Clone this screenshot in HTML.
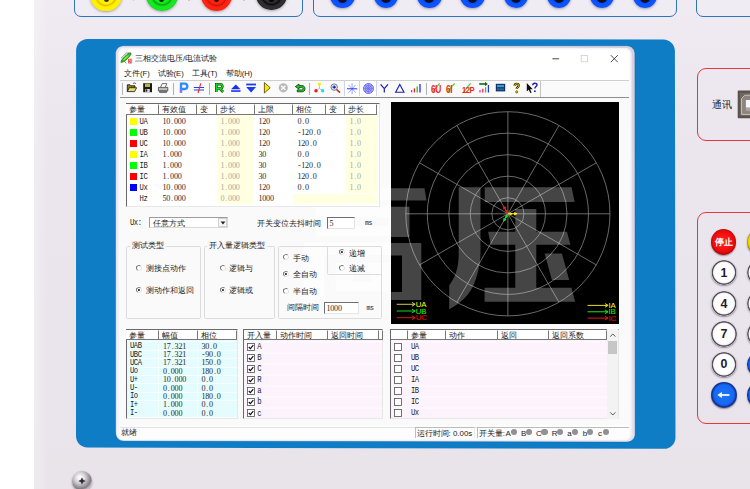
<!DOCTYPE html><html><head><meta charset="utf-8"><title>三相交流电压/电流试验</title><style>
*{box-sizing:border-box;margin:0;padding:0}
html,body{width:750px;height:489px;overflow:hidden;background:#fff}
body{position:relative;font-family:"Liberation Sans",sans-serif;color:#111}
.a{position:absolute}
.t{position:absolute;white-space:nowrap;font-size:7.7px;line-height:10px;height:10px;color:#1a1a1a}
.m{position:absolute;white-space:nowrap;font-family:"Liberation Mono",monospace;font-size:7.2px;letter-spacing:-0.46px;line-height:10px;height:10px;color:#222;transform:scaleY(1.16);transform-origin:0 50%}
.n{position:absolute;white-space:nowrap;font-family:"Liberation Serif",serif;font-size:8.1px;letter-spacing:-0.2px;line-height:10px;height:10px;color:#2a2a2a}
.n i{display:inline-block;width:3.85px;text-align:center;font-style:normal}
.g{color:#a9a9a0}
.hd{position:absolute;background:#fff;border-right:1px solid #777;border-bottom:1px solid #777;border-top:1px solid #fff;font-size:7.7px;line-height:9px;padding-left:3px;white-space:nowrap;overflow:hidden;color:#222}
.sw{position:absolute;width:7.8px;height:7.3px}
.rd{position:absolute;width:6.4px;height:6.4px;border-radius:50%;border:0.8px solid #7a7a7a;border-right-color:#e2e2e2;border-bottom-color:#e2e2e2;background:#fff;transform:rotate(-8deg)}
.rd.on:after{content:"";position:absolute;left:1.3px;top:1.3px;width:2.2px;height:2.2px;border-radius:50%;background:#222}
.cb{position:absolute;width:8px;height:8px;border:1px solid #555;background:#fff}
.gb{position:absolute;border:0.9px solid #dcdcdc;border-radius:1.5px}
.inp{position:absolute;background:#fff;border:1px solid #e4e4e4;border-top:1.3px solid #6e6e6e;border-left:1.3px solid #6e6e6e}
.lbg{position:absolute;background:#f8f8f8;padding:0 2px}
</style></head><body>
<div class="a" style="left:34.2px;top:0px;width:715.8px;height:489.0px;background:linear-gradient(90deg,rgba(255,255,255,.3) 0,rgba(255,255,255,0) 14px),linear-gradient(180deg,#f0ebf2 0,#ece6ee 110px,#eae4ec 300px,#e9e4ea 489px)"></div>
<div class="a" style="left:74.3px;top:-20px;width:228.7px;height:36.6px;border:1.3px solid #2e74b8;border-radius:7px;background:#f0ecf3"></div>
<div class="a" style="left:313px;top:-20px;width:364.3px;height:36.6px;border:1.3px solid #2e74b8;border-radius:7px;background:#f0ecf3"></div>
<div class="a" style="left:695.8px;top:-20px;width:104.2px;height:36.6px;border:1.3px solid #2e74b8;border-radius:7px;background:#f0ecf3"></div>
<div class="a" style="left:132.7px;top:0px;width:1.6px;height:1.0px;background:#d8c8b0"></div>
<div class="a" style="left:188.0px;top:0px;width:1.6px;height:1.0px;background:#d8c8b0"></div>
<div class="a" style="left:243.2px;top:0px;width:1.6px;height:1.0px;background:#d8c8b0"></div>
<div class="a" style="left:90.4px;top:-20.4px;width:31.6px;height:31.6px;border-radius:50%;background:radial-gradient(circle at 50% 50%,#f6de00 0,#fff200 7.9px,#f6de00 9.0px,#dcbc00 10.0px,#f6de00 10.9px,#fff200 12.0px,#fff200 14.7px,#f6de00 15.8px);box-shadow:0 1px 2.5px rgba(90,80,100,.5)"></div>
<div class="a" style="left:103.7px;top:-3.5px;width:5.0px;height:5.0px;border-radius:50%;background:#3a3008"></div>
<div class="a" style="left:146.0px;top:-20.6px;width:31.6px;height:31.6px;border-radius:50%;background:radial-gradient(circle at 50% 50%,#10d01a 0,#14ea1e 7.9px,#10d01a 9.0px,#0aa012 10.0px,#10d01a 10.9px,#14ea1e 12.0px,#14ea1e 14.7px,#10d01a 15.8px);box-shadow:0 1px 2.5px rgba(90,80,100,.5)"></div>
<div class="a" style="left:159.3px;top:-3.5px;width:5.0px;height:5.0px;border-radius:50%;background:#06280a"></div>
<div class="a" style="left:200.7px;top:-20.4px;width:31.6px;height:31.6px;border-radius:50%;background:radial-gradient(circle at 50% 50%,#f01e0c 0,#ff2410 7.9px,#f01e0c 9.0px,#c41408 10.0px,#f01e0c 10.9px,#ff2410 12.0px,#ff2410 14.7px,#f01e0c 15.8px);box-shadow:0 1px 2.5px rgba(90,80,100,.5)"></div>
<div class="a" style="left:214.0px;top:-3.5px;width:5.0px;height:5.0px;border-radius:50%;background:#300806"></div>
<div class="a" style="left:256.40000000000003px;top:-20.2px;width:30.4px;height:30.4px;border-radius:50%;background:radial-gradient(circle at 50% 50%,#1e1e20 0,#2e2e30 7.6px,#1e1e20 8.7px,#0a0a0a 9.6px,#1e1e20 10.5px,#2e2e30 11.6px,#2e2e30 14.1px,#1e1e20 15.2px);box-shadow:0 1px 2.5px rgba(90,80,100,.5)"></div>
<div class="a" style="left:269.1px;top:-3.5px;width:5.0px;height:5.0px;border-radius:50%;background:#000"></div>
<div class="a" style="left:330.3px;top:-16.5px;width:24.6px;height:24.6px;border-radius:50%;background:radial-gradient(circle at 50% 50%,#0a3ee0 0,#0a3ee0 5.5px,#0a4af6 7.1px,#0c54ff 9.1px,#0c54ff 11.3px,#0a4af6 12.3px);box-shadow:0 1px 2.5px rgba(90,80,100,.5)"></div>
<div class="a" style="left:337.70000000000005px;top:-6.6000000000000005px;width:9.8px;height:9.8px;border-radius:50%;background:#0a1228"></div>
<div class="a" style="left:373.59999999999997px;top:-16.5px;width:24.6px;height:24.6px;border-radius:50%;background:radial-gradient(circle at 50% 50%,#0a3ee0 0,#0a3ee0 5.5px,#0a4af6 7.1px,#0c54ff 9.1px,#0c54ff 11.3px,#0a4af6 12.3px);box-shadow:0 1px 2.5px rgba(90,80,100,.5)"></div>
<div class="a" style="left:381.0px;top:-6.6000000000000005px;width:9.8px;height:9.8px;border-radius:50%;background:#0a1228"></div>
<div class="a" style="left:417.0px;top:-16.5px;width:24.6px;height:24.6px;border-radius:50%;background:radial-gradient(circle at 50% 50%,#0a3ee0 0,#0a3ee0 5.5px,#0a4af6 7.1px,#0c54ff 9.1px,#0c54ff 11.3px,#0a4af6 12.3px);box-shadow:0 1px 2.5px rgba(90,80,100,.5)"></div>
<div class="a" style="left:424.40000000000003px;top:-6.6000000000000005px;width:9.8px;height:9.8px;border-radius:50%;background:#0a1228"></div>
<div class="a" style="left:460.3px;top:-16.5px;width:24.6px;height:24.6px;border-radius:50%;background:radial-gradient(circle at 50% 50%,#0a3ee0 0,#0a3ee0 5.5px,#0a4af6 7.1px,#0c54ff 9.1px,#0c54ff 11.3px,#0a4af6 12.3px);box-shadow:0 1px 2.5px rgba(90,80,100,.5)"></div>
<div class="a" style="left:467.70000000000005px;top:-6.6000000000000005px;width:9.8px;height:9.8px;border-radius:50%;background:#0a1228"></div>
<div class="a" style="left:503.7px;top:-16.5px;width:24.6px;height:24.6px;border-radius:50%;background:radial-gradient(circle at 50% 50%,#0a3ee0 0,#0a3ee0 5.5px,#0a4af6 7.1px,#0c54ff 9.1px,#0c54ff 11.3px,#0a4af6 12.3px);box-shadow:0 1px 2.5px rgba(90,80,100,.5)"></div>
<div class="a" style="left:511.1px;top:-6.6000000000000005px;width:9.8px;height:9.8px;border-radius:50%;background:#0a1228"></div>
<div class="a" style="left:546.7px;top:-16.5px;width:24.6px;height:24.6px;border-radius:50%;background:radial-gradient(circle at 50% 50%,#0a3ee0 0,#0a3ee0 5.5px,#0a4af6 7.1px,#0c54ff 9.1px,#0c54ff 11.3px,#0a4af6 12.3px);box-shadow:0 1px 2.5px rgba(90,80,100,.5)"></div>
<div class="a" style="left:554.1px;top:-6.6000000000000005px;width:9.8px;height:9.8px;border-radius:50%;background:#0a1228"></div>
<div class="a" style="left:589.9000000000001px;top:-16.5px;width:24.6px;height:24.6px;border-radius:50%;background:radial-gradient(circle at 50% 50%,#0a3ee0 0,#0a3ee0 5.5px,#0a4af6 7.1px,#0c54ff 9.1px,#0c54ff 11.3px,#0a4af6 12.3px);box-shadow:0 1px 2.5px rgba(90,80,100,.5)"></div>
<div class="a" style="left:597.3000000000001px;top:-6.6000000000000005px;width:9.8px;height:9.8px;border-radius:50%;background:#0a1228"></div>
<div class="a" style="left:632.7px;top:-16.5px;width:24.6px;height:24.6px;border-radius:50%;background:radial-gradient(circle at 50% 50%,#0a3ee0 0,#0a3ee0 5.5px,#0a4af6 7.1px,#0c54ff 9.1px,#0c54ff 11.3px,#0a4af6 12.3px);box-shadow:0 1px 2.5px rgba(90,80,100,.5)"></div>
<div class="a" style="left:640.1px;top:-6.6000000000000005px;width:9.8px;height:9.8px;border-radius:50%;background:#0a1228"></div>
<svg class="a" style="left:0;top:0" width="750" height="489" viewBox="0 0 750 489"><defs><linearGradient id="hl" x1="0" y1="1" x2="1" y2="0"><stop offset="0" stop-color="#f6f4f9"/><stop offset=".5" stop-color="#e6e2ec"/><stop offset="1" stop-color="#d6d1de"/></linearGradient></defs><path d="M76.10 50.50C76.10 44.15 81.25 39.00 87.60 39.01L663.40 39.39C669.75 39.40 674.91 44.55 674.92 50.90L675.48 437.40C675.49 443.75 670.35 448.89 664.00 448.87L87.50 447.53C81.15 447.51 76.00 442.35 76.00 436.00Z" fill="#0f7dc5"/><path d="M115.50 53.70C115.50 49.28 119.08 45.70 123.50 45.70L626.90 45.70C631.32 45.70 634.90 49.28 634.90 53.70L635.10 434.10C635.10 438.52 631.52 442.09 627.10 442.08L123.70 441.02C119.28 441.01 115.70 437.42 115.70 433.00Z" fill="url(#hl)" stroke="#0a64a6" stroke-opacity=".55" stroke-width=".8"/><path d="M118.40 53.70C118.40 50.39 121.09 47.70 124.40 47.70L625.60 47.90C628.91 47.90 631.60 50.59 631.60 53.90L631.80 434.30C631.80 437.61 629.11 440.30 625.80 440.29L124.60 439.51C121.29 439.50 118.60 436.81 118.60 433.50Z" fill="#f3f1f7"/></svg>
<div class="a" style="left:120.2px;top:49.6px;width:508.4px;height:389.0px;background:#fafafa;border-radius:4px;box-shadow:0 0 1.5px 1px #fbfaff"></div>
<div class="a" style="left:120.2px;top:49.6px;width:508.4px;height:30.4px;background:#fff;border-radius:4px 4px 0 0"></div>
<svg class="a" style="left:119px;top:51px" width="15" height="14" viewBox="119 51 15 14"><path d="M121 58.300L126.400 53l4.600.2M121.200 62.200l1.200-2.400M126.200 63.400l-2-2.600" stroke="#555" stroke-width=".7" fill="none"/><ellipse cx="126" cy="57.700" rx="6.700" ry="1.700" transform="rotate(-43 126 57.700)" fill="#1fd010" stroke="#1a5a10" stroke-width=".6"/><ellipse cx="126" cy="57.700" rx="3.600" ry=".7" transform="rotate(-43 126 57.700)" fill="#8af050"/><rect x="128.200" y="58.800" width="3.400" height="4.600" fill="#e83434"/><path d="M129 59.800h1.500l-.8 1.200c1.200 0 1.200 1.600-.8 1.500" stroke="#fff" stroke-width=".55" fill="none"/><path d="M131.900 58.600v4.800" stroke="#40c8d8" stroke-width=".5"/></svg>
<div class="t" style="left:135px;top:54.3px;font-size:7.7px;color:#222">三相交流电压/电流试验</div>
<svg class="a" style="left:550px;top:52px" width="72" height="14" viewBox="0 0 72 14"><path d="M2.4 6.8h6.8" stroke="#333" stroke-width=".9"/><rect x="31.2" y="3.5" width="6.3" height="6.3" fill="none" stroke="#cfcfcf" stroke-width=".8"/><path d="M60.8 3.2l7 7M67.8 3.2l-7 7" stroke="#333" stroke-width=".9"/></svg>
<div class="t" style="left:124px;top:69.2px;color:#222">文件(F)</div>
<div class="t" style="left:157.5px;top:69.2px;color:#222">试验(E)</div>
<div class="t" style="left:191.6px;top:69.2px;color:#222">工具(T)</div>
<div class="t" style="left:225.7px;top:69.2px;color:#222">帮助(H)</div>
<div class="a" style="left:120.2px;top:80px;width:508.4px;height:0.9px;background:#cfcfcf"></div>
<div class="a" style="left:120.2px;top:96.7px;width:508.4px;height:1.0px;background:#8e8e8e"></div>
<div class="a" style="left:121.6px;top:82.5px;width:0.8px;height:12.5px;background:#b5b5b5"></div>
<div class="a" style="left:172.8px;top:82.5px;width:0.9px;height:12.5px;background:#b0b0b0"></div>
<div class="a" style="left:209.2px;top:82.5px;width:0.9px;height:12.5px;background:#b0b0b0"></div>
<div class="a" style="left:309.2px;top:82.5px;width:0.9px;height:12.5px;background:#b0b0b0"></div>
<div class="a" style="left:426.2px;top:82.5px;width:0.9px;height:12.5px;background:#b0b0b0"></div>
<div class="a" style="left:540.3px;top:81px;width:0.8px;height:15.6px;background:#c4c4c4"></div>
<div class="a" style="left:344.4px;top:81.4px;width:15.4px;height:15.0px;background:#fff;border-left:0.8px solid #cfd6e6;border-right:0.8px solid #cfd6e6"></div>
<div class="a" style="left:360.4px;top:81.4px;width:16.2px;height:15.0px;background:#fff;border-right:0.8px solid #cfd6e6"></div>
<svg class="a" style="left:120px;top:79.300px" width="430" height="18" viewBox="120 80 430 18">
<!-- open -->
<path d="M127.3 92.6v-6.8h2.8l.9 1h4v1.6" fill="#8c8420" stroke="#111" stroke-width=".8"/><path d="M127.3 92.6l1.9-3.9h7.4l-2 3.9z" fill="#e6dc6a" stroke="#111" stroke-width=".8"/><path d="M133 84.6c1.2-1 2.4-.8 3 .4" stroke="#111" stroke-width=".7" fill="none"/>
<!-- save -->
<rect x="143.2" y="84.2" width="8.8" height="9" fill="#1a1a10" /><rect x="145" y="84.6" width="5" height="3.4" fill="#b8b050"/><rect x="145.4" y="90" width="4.4" height="3" fill="#d8d8d8"/><rect x="146" y="90.4" width="1.3" height="2.2" fill="#222"/>
<!-- print -->
<path d="M160.6 88.2l1.6-3.6h4.6l-1.4 3.6" fill="#fff" stroke="#333" stroke-width=".7"/><path d="M158.4 88.4h9.4v3.6h-9.4z" fill="#bdbdbd" stroke="#333" stroke-width=".7"/><path d="M159.6 92h7v1.6h-7z" fill="#8a8a8a" stroke="#333" stroke-width=".5"/><rect x="165.4" y="89.6" width="1.2" height=".9" fill="#e0d020"/>
<!-- P -->
<path d="M181 93.6v-9h3.6a2.7 2.7 0 0 1 0 5.4H181" fill="none" stroke="#2a8cff" stroke-width="2.3"/><path d="M181 93.8v-3.600" stroke="#9a6cf4" stroke-width="2.300"/>
<!-- neq -->
<path d="M193.800 88.500h10.200M193.800 91h10.200" stroke="#2a3cf0" stroke-width="1.100"/><path d="M200.800 84.400l-2.800 9.600" stroke="#f82424" stroke-width="1.100"/>
<!-- R -->
<path d="M216.300 93v-7.800h3.900a2.150 2.150 0 0 1 0 4.300H216.300M219.800 89.600l3.300 3.400" fill="none" stroke="#0b4a0b" stroke-width="2.600"/><path d="M216.300 93v-7.800h3.900a2.150 2.150 0 0 1 0 4.300H216.300M219.800 89.600l3.300 3.400" fill="none" stroke="#24d824" stroke-width="1.300"/>
<!-- up -->
<path d="M235.800 85.500l4.700 4.700h-9.400z" fill="#1a2cf4"/><rect x="231.100" y="91.200" width="9.400" height="1.700" fill="#2a3cf6"/>
<!-- down -->
<rect x="246.2" y="84.6" width="9.8" height="1.8" fill="#1a3cf0"/><path d="M251.1 93.4l4.9-5.4h-9.8z" fill="#1a3cf0"/>
<!-- play -->
<path d="M264.4 83.6v10.4l5.8-5.2z" fill="#ffe800" stroke="#4a4300" stroke-width=".8"/>
<!-- stop -->
<circle cx="283.3" cy="88.8" r="4.6" fill="#b9b9b9"/><path d="M281.2 86.7l4.2 4.2M285.4 86.7l-4.2 4.2" stroke="#fff" stroke-width="1.3"/>
<!-- undo -->
<path d="M299 85l-3.700 2.600 3.700 2.600v-1.600h2.700c.9 0 1.300.4 1.300 1.100s-.5 1.200-1.300 1.200h-4.500v1.900h4.800c1.900 0 3-1.200 3-3.100s-1.200-3.100-3-3.100h-3z" fill="#22cc22" stroke="#0a3a0a" stroke-width=".8"/>
<!-- 3 dots -->
<path d="M319.400 85.400v4l-3.200 2.300M319.400 89.400l3.200 2.300" stroke="#9a9a9a" stroke-width=".6" fill="none"/><circle cx="319.400" cy="85.100" r="1.700" fill="#f8ec00"/><circle cx="316" cy="91.800" r="1.700" fill="#f41818"/><circle cx="322.600" cy="91.800" r="1.700" fill="#10e0f0"/>
<!-- zoom -->
<circle cx="334.200" cy="88.100" r="3.200" fill="#e6ecff" stroke="#7a7a84" stroke-width="1"/><path d="M332.500 88.100h3.400M334.200 86.400v3.400" stroke="#10189a" stroke-width="1.100"/><path d="M336.700 90.600l3.300 3" stroke="#d82020" stroke-width="1.500"/>
<!-- star -->
<path d="M352.100 84.400v10.600M348.600 86l7 7.600M355.600 86l-7 7.600" stroke="#5a6cff" stroke-width=".6"/><path d="M347 89.800h10.200" stroke="#2a30f4" stroke-width="1"/>
<!-- polar -->
<circle cx="368.500" cy="89.500" r="5" fill="#b9b2ff" stroke="#4a50e8" stroke-width=".8"/><circle cx="368.500" cy="89.500" r="3.200" fill="none" stroke="#4a50e8" stroke-width=".6"/><circle cx="368.500" cy="89.500" r="1.500" fill="none" stroke="#4a50e8" stroke-width=".6"/><path d="M363.500 89.500h10M368.500 84.500v10M365 86l7 7M372 86l-7 7" stroke="#5a60f0" stroke-width=".4"/>
<!-- Y -->
<path d="M380.600 85.400l3.700 4.200 3.700-4.200M384.300 89.600v4" stroke="#1a1eb0" stroke-width="1.200" fill="none"/>
<!-- delta -->
<path d="M399.800 85.500l4.200 7.700h-8.400z" stroke="#1a1eb0" stroke-width="1.100" fill="none"/>
<!-- bars -->
<path d="M411.600 93.400v-2.400" stroke="#e020e0" stroke-width="1.300"/><path d="M414.400 93.400v-4" stroke="#f02020" stroke-width="1.300"/><path d="M417.200 93.400v-6" stroke="#20c820" stroke-width="1.300"/><path d="M420 93.400v-8.400" stroke="#2030f0" stroke-width="1.300"/>
<!-- 6U 6I 12P -->
<path d="M432.600 92.800l7-8.400" stroke="#30d030" stroke-width="1.100"/><path d="M447.600 92.800l7-8.400" stroke="#30d030" stroke-width="1.100"/><path d="M463.600 92.800l7-8.400" stroke="#30d030" stroke-width="1.100"/>
<!-- bars w arrow -->
<path d="M480 93.400v-2.400" stroke="#e020e0" stroke-width="1.200"/><path d="M482.800 93.400v-3.600" stroke="#f02020" stroke-width="1.200"/><path d="M485.600 93.400v-5.200" stroke="#20c820" stroke-width="1.200"/><path d="M488.400 93.400v-7.400" stroke="#2030f0" stroke-width="1.200"/><path d="M479.200 85h6.400" stroke="#0a700a" stroke-width="1.600"/><path d="M485 82.800l2.800 2.200-2.800 2.200z" fill="#0a700a"/>
<!-- screen -->
<rect x="495.800" y="84.800" width="9.400" height="7.600" fill="#12306a"/><rect x="497" y="86" width="7" height="2.200" fill="#38a0c8"/><rect x="497" y="89.400" width="7" height="1.800" fill="#2a6a9a"/>
<!-- ? -->
<path d="M514.600 86.800c0-2.600 4.200-2.600 4.200-.2 0 1.600-2.100 1.600-2.100 3.500" stroke="#2a2400" stroke-width="2.200" fill="none"/><path d="M514.600 86.800c0-2.600 4.200-2.600 4.200-.2 0 1.600-2.100 1.600-2.100 3.500" stroke="#f4e010" stroke-width="1" fill="none"/><circle cx="516.700" cy="92.900" r="1.100" fill="#f4e010" stroke="#2a2400" stroke-width=".6"/>
<!-- cursor ? -->
<path d="M526.800 84v8.600l2-1.800 1.500 3.200 1.300-.6-1.500-3.100h2.700z" fill="#111"/><path d="M532.800 86.200c0-2.600 4.200-2.600 4.200-.2 0 1.600-2.100 1.600-2.100 3.600" stroke="#1a1ea8" stroke-width="1.400" fill="none"/><circle cx="534.900" cy="92.200" r=".9" fill="#1a1ea8"/>
</svg>
<div class="a" style="left:430.6px;top:84.200px;height:11px;line-height:11px;font-size:10.6px;font-weight:bold;color:#f02a12;letter-spacing:-.7px;transform:scaleX(.8);transform-origin:0 50%;white-space:nowrap">6U</div>
<div class="a" style="left:446.4px;top:84.200px;height:11px;line-height:11px;font-size:10.6px;font-weight:bold;color:#f02a12;letter-spacing:-.7px;transform:scaleX(.8);transform-origin:0 50%;white-space:nowrap">6I</div>
<div class="a" style="left:461.6px;top:84.200px;height:11px;line-height:11px;font-size:9.6px;font-weight:bold;color:#f02a12;letter-spacing:-.7px;transform:scaleX(.8);transform-origin:0 50%;white-space:nowrap">12P</div>
<svg class="a" style="left:180px;top:170px" width="211" height="140" viewBox="180 170 211 140"><path fill="#fff" fill-opacity=".55" fill-rule="evenodd" d="M301 187.7H351.6V175.6H373.2V187.7H424L426 200H299ZM315.6 206.3H409V236.6H315.6ZM335.6 217.4V225.6H389V217.4ZM303.6 242.4H420.8V299.6H390.8V291.5H401.5V255H324.6V299.6H303.6ZM335.4 263H389.2V291.5H335.4ZM353.6 272.6V282H371V272.6Z"/></svg>
<div class="a" style="left:125.6px;top:103.4px;width:254.8px;height:103.6px;background:#fff;border-top:1px solid #6a6a6a;border-left:1px solid #6a6a6a;border-right:1px solid #e8e8e8;border-bottom:1px solid #e8e8e8"></div>
<div class="hd" style="left:126.4px;top:104.2px;width:32.8px;height:10.6px">参量</div>
<div class="hd" style="left:159.2px;top:104.2px;width:37.8px;height:10.6px">有效值</div>
<div class="hd" style="left:197px;top:104.2px;width:20.1px;height:10.6px">变</div>
<div class="hd" style="left:217.1px;top:104.2px;width:38.2px;height:10.6px">步长</div>
<div class="hd" style="left:255.3px;top:104.2px;width:37.9px;height:10.6px">上限</div>
<div class="hd" style="left:293.2px;top:104.2px;width:32.6px;height:10.6px">相位</div>
<div class="hd" style="left:325.8px;top:104.2px;width:19.2px;height:10.6px">变</div>
<div class="hd" style="left:345px;top:104.2px;width:32.2px;height:10.6px">步长</div>
<div class="a" style="left:217.4px;top:115.4px;width:36.8px;height:89.0px;background:#ffffe2"></div>
<div class="a" style="left:345.6px;top:115.4px;width:31.4px;height:78.0px;background:#ffffe2"></div>
<div class="a" style="left:293.4px;top:193.6px;width:83.6px;height:10.8px;background:#ffffe2"></div>
<div class="sw" style="left:129.6px;top:117.5px;background:#ffff00"></div>
<div class="m" style="left:139.6px;top:116.8px;">UA</div>
<div class="n" style="left:162.4px;top:117.3px;">10<i>.</i>000</div>
<div class="n g" style="left:220.4px;top:117.3px;">1<i>.</i>000</div>
<div class="n" style="left:258.4px;top:117.3px;">120</div>
<div class="n" style="left:297.4px;top:117.3px;">0<i>.</i>0</div>
<div class="n g" style="left:349.4px;top:117.3px;">1<i>.</i>0</div>
<div class="sw" style="left:129.6px;top:128.5px;background:#00ff00"></div>
<div class="m" style="left:139.6px;top:127.8px;">UB</div>
<div class="n" style="left:162.4px;top:128.3px;">10<i>.</i>000</div>
<div class="n g" style="left:220.4px;top:128.3px;">1<i>.</i>000</div>
<div class="n" style="left:258.4px;top:128.3px;">120</div>
<div class="n" style="left:297.4px;top:128.3px;"><i>-</i>120<i>.</i>0</div>
<div class="n g" style="left:349.4px;top:128.3px;">1<i>.</i>0</div>
<div class="sw" style="left:129.6px;top:139.5px;background:#ff0000"></div>
<div class="m" style="left:139.6px;top:138.8px;">UC</div>
<div class="n" style="left:162.4px;top:139.3px;">10<i>.</i>000</div>
<div class="n g" style="left:220.4px;top:139.3px;">1<i>.</i>000</div>
<div class="n" style="left:258.4px;top:139.3px;">120</div>
<div class="n" style="left:297.4px;top:139.3px;">120<i>.</i>0</div>
<div class="n g" style="left:349.4px;top:139.3px;">1<i>.</i>0</div>
<div class="sw" style="left:129.6px;top:150.6px;background:#ffff00"></div>
<div class="m" style="left:139.6px;top:149.9px;">IA</div>
<div class="n" style="left:162.4px;top:150.4px;">1<i>.</i>000</div>
<div class="n g" style="left:220.4px;top:150.4px;">1<i>.</i>000</div>
<div class="n" style="left:258.4px;top:150.4px;">30</div>
<div class="n" style="left:297.4px;top:150.4px;">0<i>.</i>0</div>
<div class="n g" style="left:349.4px;top:150.4px;">1<i>.</i>0</div>
<div class="sw" style="left:129.6px;top:161.6px;background:#00ff00"></div>
<div class="m" style="left:139.6px;top:160.9px;">IB</div>
<div class="n" style="left:162.4px;top:161.4px;">1<i>.</i>000</div>
<div class="n g" style="left:220.4px;top:161.4px;">1<i>.</i>000</div>
<div class="n" style="left:258.4px;top:161.4px;">30</div>
<div class="n" style="left:297.4px;top:161.4px;"><i>-</i>120<i>.</i>0</div>
<div class="n g" style="left:349.4px;top:161.4px;">1<i>.</i>0</div>
<div class="sw" style="left:129.6px;top:172.6px;background:#ff0000"></div>
<div class="m" style="left:139.6px;top:171.9px;">IC</div>
<div class="n" style="left:162.4px;top:172.4px;">1<i>.</i>000</div>
<div class="n g" style="left:220.4px;top:172.4px;">1<i>.</i>000</div>
<div class="n" style="left:258.4px;top:172.4px;">30</div>
<div class="n" style="left:297.4px;top:172.4px;">120<i>.</i>0</div>
<div class="n g" style="left:349.4px;top:172.4px;">1<i>.</i>0</div>
<div class="sw" style="left:129.6px;top:183.6px;background:#0000ff"></div>
<div class="m" style="left:139.6px;top:182.9px;">Ux</div>
<div class="n" style="left:162.4px;top:183.4px;">10<i>.</i>000</div>
<div class="n g" style="left:220.4px;top:183.4px;">1<i>.</i>000</div>
<div class="n" style="left:258.4px;top:183.4px;">120</div>
<div class="n" style="left:297.4px;top:183.4px;">0<i>.</i>0</div>
<div class="n g" style="left:349.4px;top:183.4px;">1<i>.</i>0</div>
<div class="m" style="left:139.6px;top:193.9px;">Hz</div>
<div class="n" style="left:162.4px;top:194.4px;">50<i>.</i>000</div>
<div class="n g" style="left:220.4px;top:194.4px;">0<i>.</i>000</div>
<div class="n" style="left:258.4px;top:194.4px;">1000</div>
<div class="m" style="left:130px;top:218.1px;">Ux:</div>
<div class="a" style="left:149.2px;top:216.6px;width:79.0px;height:11.8px;background:#fff;border:0.9px solid #9c9c9c;border-right-color:#d8d8d8;border-bottom-color:#d8d8d8"></div>
<div class="t" style="left:152.6px;top:218.5px;">任意方式</div>
<div class="a" style="left:218px;top:217.8px;width:9.2px;height:9.6px;background:#f6f6f6;border:0.7px solid #d0d0d0"></div>
<svg class="a" style="left:219.6px;top:221.2px" width="6" height="4" viewBox="0 0 6 4"><path d="M.6.6h4.800L3 3.400z" fill="#222"/></svg>
<div class="t" style="left:256.8px;top:218.5px;">开关变位去抖时间</div>
<div class="inp" style="left:326.8px;top:216.8px;width:28.6px;height:12.2px"></div>
<div class="n" style="left:329.6px;top:219.0px;">5</div>
<div class="m" style="left:365px;top:218.5px;font-size:6.6px">ms</div>
<div class="gb" style="left:126.4px;top:246px;width:75px;height:72.6px"></div>
<div class="gb" style="left:204.2px;top:246px;width:71px;height:72.6px"></div>
<div class="gb" style="left:278.2px;top:245.6px;width:103.8px;height:73px"></div>
<div class="gb" style="left:327px;top:245.6px;width:55px;height:29.6px"></div>
<div class="lbg t" style="left:130px;top:240.8px">测试类型</div>
<div class="lbg t" style="left:207.4px;top:240.8px">开入量逻辑类型</div>
<div class="rd" style="left:135.9px;top:264.9px"></div>
<div class="t" style="left:145.6px;top:264.1px;">测接点动作</div>
<div class="rd on" style="left:135.9px;top:286.5px"></div>
<div class="t" style="left:145.6px;top:285.7px;">测动作和返回</div>
<div class="rd" style="left:219.5px;top:264.9px"></div>
<div class="t" style="left:229.2px;top:264.1px;">逻辑与</div>
<div class="rd on" style="left:219.5px;top:286.5px"></div>
<div class="t" style="left:229.2px;top:285.7px;">逻辑或</div>
<div class="rd" style="left:283.1px;top:254.3px"></div>
<div class="t" style="left:292.8px;top:253.5px;">手动</div>
<div class="rd on" style="left:283.1px;top:270.7px"></div>
<div class="t" style="left:292.8px;top:269.9px;">全自动</div>
<div class="rd" style="left:283.1px;top:287.7px"></div>
<div class="t" style="left:292.8px;top:286.9px;">半自动</div>
<div class="rd on" style="left:338.9px;top:249.3px"></div>
<div class="t" style="left:348.6px;top:248.5px;">递增</div>
<div class="rd" style="left:338.9px;top:264.5px"></div>
<div class="t" style="left:348.6px;top:263.7px;">递减</div>
<div class="t" style="left:286.8px;top:302.7px;">间隔时间</div>
<div class="inp" style="left:324px;top:301.6px;width:35.4px;height:12.6px"></div>
<div class="n" style="left:326.4px;top:304.0px;">1000</div>
<div class="m" style="left:366.6px;top:303.5px;font-size:6.6px">ms</div>
<svg class="a" style="left:390.5px;top:101.5px" width="228.4" height="222.3" viewBox="390.5 101.5 228.4 222.3"><rect x="390.5" y="101.5" width="230" height="224" fill="#000"/><g fill="none" stroke="#8c8c8c" stroke-width=".75"><circle cx="507.4" cy="213.3" r="16.1"/><circle cx="507.4" cy="213.3" r="37.6"/><circle cx="507.4" cy="213.3" r="59.1"/><circle cx="507.4" cy="213.3" r="80.6"/><circle cx="507.4" cy="213.3" r="102.1"/><path d="M507.4 213.3L609.5 213.3"/><path d="M507.4 213.3L595.8 162.3"/><path d="M507.4 213.3L558.5 124.9"/><path d="M507.4 213.3L507.4 111.2"/><path d="M507.4 213.3L456.4 124.9"/><path d="M507.4 213.3L419.0 162.3"/><path d="M507.4 213.3L405.3 213.3"/><path d="M507.4 213.3L419.0 264.4"/><path d="M507.4 213.3L456.3 301.7"/><path d="M507.4 213.3L507.4 315.4"/><path d="M507.4 213.3L558.5 301.7"/><path d="M507.4 213.3L595.8 264.4"/></g><path d="M507.4 213.3L516.0 213.3M513.7 212.0L516.0 213.3L513.7 214.6" stroke="#ffee00" stroke-width="1.1" fill="none"/><path d="M507.4 213.3L503.3 206.2M503.3 208.8L503.3 206.2L505.6 207.5" stroke="#ff1a10" stroke-width="1.1" fill="none"/><path d="M507.4 213.3L503.3 220.4M505.6 219.1L503.3 220.4L503.3 217.8" stroke="#18e020" stroke-width="1.1" fill="none"/><path d="M507.4 213.3L511.4 213.3M509.1 212.0L511.4 213.3L509.1 214.6" stroke="#ffee00" stroke-width="0.9" fill="none"/><path d="M507.4 213.3L505.4 209.8M505.4 212.4L505.4 209.8L507.7 211.1" stroke="#ff1a10" stroke-width="0.9" fill="none"/><path d="M507.4 213.3L505.4 216.8M507.7 215.5L505.4 216.8L505.4 214.2" stroke="#18e020" stroke-width="0.9" fill="none"/><path d="M396.2 303.8H414.6M411.40000000000003 301.90000000000003L414.6 303.8L411.40000000000003 305.7" stroke="#d8c848" stroke-width="1" fill="none"/><path d="M396.2 310.5H414.6M411.40000000000003 308.6L414.6 310.5L411.40000000000003 312.4" stroke="#18d828" stroke-width="1" fill="none"/><path d="M396.2 317.2H414.6M411.40000000000003 315.3L414.6 317.2L411.40000000000003 319.09999999999997" stroke="#d81818" stroke-width="1" fill="none"/><path d="M587 304.9H607.6M604.4 303.0L607.6 304.9L604.4 306.79999999999995" stroke="#e8e020" stroke-width="1" fill="none"/><path d="M587 311.3H607.6M604.4 309.40000000000003L607.6 311.3L604.4 313.2" stroke="#18e828" stroke-width="1" fill="none"/><path d="M587 317.6H607.6M604.4 315.70000000000005L607.6 317.6L604.4 319.5" stroke="#e81818" stroke-width="1" fill="none"/><path fill="#fff" fill-opacity=".27" fill-rule="evenodd" d="M458.2 186.7H480V249.6C480 262 478.2 270 475.2 279C471.6 290 465 300 448.7 308.8V285C455.5 276 458.2 266 458.2 253.6ZM484.2 186.8H571.1L574.1 201.4H484.2ZM514.8 208.6H535.8V231.2H566.5L570 244.3H535.8V287.2H571L574.6 301.3H484.1V287.2H514.8V244.3H490.3L487.6 231.2H514.8ZM544.1 252.9H561.4L568.7 279.6H551.4ZM301 187.7H351.6V175.6H373.2V187.7H424L426 200H299ZM315.6 206.3H409V236.6H315.6ZM335.6 217.4V225.6H389V217.4ZM303.6 242.4H420.8V299.6H390.8V291.5H401.5V255H324.6V299.6H303.6ZM335.4 263H389.2V291.5H335.4ZM353.6 272.6V282H371V272.6Z"/></svg>
<div class="t" style="left:415.8px;top:299.8px;font-size:7.8px;color:#ffff00;letter-spacing:-.2px">UA</div>
<div class="t" style="left:415.8px;top:306.5px;font-size:7.8px;color:#00ff00;letter-spacing:-.2px">UB</div>
<div class="t" style="left:415.8px;top:313.2px;font-size:7.8px;color:#ff0000;letter-spacing:-.2px">UC</div>
<div class="t" style="left:608.6px;top:300.9px;font-size:7.8px;color:#ffff00;letter-spacing:-.2px">IA</div>
<div class="t" style="left:608.6px;top:307.3px;font-size:7.8px;color:#00ff00;letter-spacing:-.2px">IB</div>
<div class="t" style="left:608.6px;top:313.6px;font-size:7.8px;color:#ff0000;letter-spacing:-.2px">IC</div>
<div class="a" style="left:125.6px;top:328.6px;width:112.2px;height:90.8px;background:repeating-linear-gradient(180deg,transparent 0,transparent 7.48px,rgba(255,255,255,.75) 7.48px,rgba(255,255,255,.75) 8.38px) 0 3.90px,#e4fcfe;border-top:1px solid #6a6a6a;border-left:1px solid #6a6a6a;border-right:1px solid #e8e8e8;border-bottom:1px solid #e8e8e8"></div>
<div class="hd" style="left:126.4px;top:329.6px;width:32.8px;height:10.2px">参量</div>
<div class="hd" style="left:159.2px;top:329.6px;width:39.0px;height:10.2px">幅值</div>
<div class="hd" style="left:198.2px;top:329.6px;width:38.8px;height:10.2px">相位</div>
<div class="m" style="left:130px;top:341.1px;">UAB</div>
<div class="n" style="left:163px;top:341.6px;">17<i>.</i>321</div>
<div class="n" style="left:201.4px;top:341.6px;">30<i>.</i>0</div>
<div class="m" style="left:130px;top:349.5px;">UBC</div>
<div class="n" style="left:163px;top:350.0px;">17<i>.</i>321</div>
<div class="n" style="left:201.4px;top:350.0px;"><i>-</i>90<i>.</i>0</div>
<div class="m" style="left:130px;top:357.9px;">UCA</div>
<div class="n" style="left:163px;top:358.4px;">17<i>.</i>321</div>
<div class="n" style="left:201.4px;top:358.4px;">150<i>.</i>0</div>
<div class="m" style="left:130px;top:366.2px;">Uo</div>
<div class="n" style="left:163px;top:366.7px;">0<i>.</i>000</div>
<div class="n" style="left:201.4px;top:366.7px;">180<i>.</i>0</div>
<div class="m" style="left:130px;top:374.6px;">U+</div>
<div class="n" style="left:163px;top:375.1px;">10<i>.</i>000</div>
<div class="n" style="left:201.4px;top:375.1px;">0<i>.</i>0</div>
<div class="m" style="left:130px;top:383.0px;">U-</div>
<div class="n" style="left:163px;top:383.5px;">0<i>.</i>000</div>
<div class="n" style="left:201.4px;top:383.5px;">0<i>.</i>0</div>
<div class="m" style="left:130px;top:391.4px;">Io</div>
<div class="n" style="left:163px;top:391.9px;">0<i>.</i>000</div>
<div class="n" style="left:201.4px;top:391.9px;">180<i>.</i>0</div>
<div class="m" style="left:130px;top:399.8px;">I+</div>
<div class="n" style="left:163px;top:400.3px;">1<i>.</i>000</div>
<div class="n" style="left:201.4px;top:400.3px;">0<i>.</i>0</div>
<div class="m" style="left:130px;top:408.1px;">I-</div>
<div class="n" style="left:163px;top:408.6px;">0<i>.</i>000</div>
<div class="n" style="left:201.4px;top:408.6px;">0<i>.</i>0</div>
<div class="a" style="left:157.6px;top:340.4px;width:1.0px;height:77.6px;background:#f3feff"></div>
<div class="a" style="left:196.6px;top:340.4px;width:1.0px;height:77.6px;background:#f3feff"></div>
<div class="a" style="left:243.2px;top:328.6px;width:139.8px;height:90.8px;background:repeating-linear-gradient(180deg,transparent 0,transparent 10.13px,rgba(255,255,255,.75) 10.13px,rgba(255,255,255,.75) 11.03px) 0 1.70px,#fdf3fd;border-top:1px solid #6a6a6a;border-left:1px solid #6a6a6a;border-right:1px solid #e8e8e8;border-bottom:1px solid #e8e8e8"></div>
<div class="hd" style="left:244px;top:329.6px;width:32.8px;height:10.2px">开入量</div>
<div class="hd" style="left:276.8px;top:329.6px;width:51.6px;height:10.2px">动作时间</div>
<div class="hd" style="left:328.4px;top:329.6px;width:50.4px;height:10.2px">返回时间</div>
<div class="hd" style="left:378.8px;top:329.6px;width:3.6px;height:10.2px"></div>
<svg class="a" style="left:246.8px;top:342.7px" width="8" height="8" viewBox="0 0 8 8"><rect x=".5" y=".5" width="7" height="7" fill="#fff" stroke="#5a5a5a" stroke-width=".85"/><path d="M1.800 4l1.600 1.700 2.900-3.500" stroke="#111" stroke-width="1.200" fill="none"/></svg>
<div class="m" style="left:257.2px;top:342.2px;">A</div>
<svg class="a" style="left:246.8px;top:353.8px" width="8" height="8" viewBox="0 0 8 8"><rect x=".5" y=".5" width="7" height="7" fill="#fff" stroke="#5a5a5a" stroke-width=".85"/><path d="M1.800 4l1.600 1.700 2.900-3.500" stroke="#111" stroke-width="1.200" fill="none"/></svg>
<div class="m" style="left:257.2px;top:353.2px;">B</div>
<svg class="a" style="left:246.8px;top:364.8px" width="8" height="8" viewBox="0 0 8 8"><rect x=".5" y=".5" width="7" height="7" fill="#fff" stroke="#5a5a5a" stroke-width=".85"/><path d="M1.800 4l1.600 1.700 2.900-3.500" stroke="#111" stroke-width="1.200" fill="none"/></svg>
<div class="m" style="left:257.2px;top:364.3px;">C</div>
<svg class="a" style="left:246.8px;top:375.9px" width="8" height="8" viewBox="0 0 8 8"><rect x=".5" y=".5" width="7" height="7" fill="#fff" stroke="#5a5a5a" stroke-width=".85"/><path d="M1.800 4l1.600 1.700 2.900-3.500" stroke="#111" stroke-width="1.200" fill="none"/></svg>
<div class="m" style="left:257.2px;top:375.4px;">R</div>
<svg class="a" style="left:246.8px;top:386.9px" width="8" height="8" viewBox="0 0 8 8"><rect x=".5" y=".5" width="7" height="7" fill="#fff" stroke="#5a5a5a" stroke-width=".85"/><path d="M1.800 4l1.600 1.700 2.900-3.500" stroke="#111" stroke-width="1.200" fill="none"/></svg>
<div class="m" style="left:257.2px;top:386.4px;">a</div>
<svg class="a" style="left:246.8px;top:397.9px" width="8" height="8" viewBox="0 0 8 8"><rect x=".5" y=".5" width="7" height="7" fill="#fff" stroke="#5a5a5a" stroke-width=".85"/><path d="M1.800 4l1.600 1.700 2.900-3.500" stroke="#111" stroke-width="1.200" fill="none"/></svg>
<div class="m" style="left:257.2px;top:397.4px;">b</div>
<svg class="a" style="left:246.8px;top:409.0px" width="8" height="8" viewBox="0 0 8 8"><rect x=".5" y=".5" width="7" height="7" fill="#fff" stroke="#5a5a5a" stroke-width=".85"/><path d="M1.800 4l1.600 1.700 2.900-3.500" stroke="#111" stroke-width="1.200" fill="none"/></svg>
<div class="m" style="left:257.2px;top:408.5px;">c</div>
<div class="a" style="left:390.2px;top:328.6px;width:228.4px;height:90.8px;background:repeating-linear-gradient(180deg,transparent 0,transparent 10.13px,rgba(255,255,255,.75) 10.13px,rgba(255,255,255,.75) 11.03px) 0 1.70px,#fdf3fd;border-top:1px solid #6a6a6a;border-left:1px solid #6a6a6a;border-right:1px solid #e8e8e8;border-bottom:1px solid #e8e8e8"></div>
<div class="hd" style="left:391px;top:329.6px;width:16.6px;height:10.2px"></div>
<div class="hd" style="left:407.6px;top:329.6px;width:38.2px;height:10.2px">参量</div>
<div class="hd" style="left:445.8px;top:329.6px;width:51.8px;height:10.2px">动作</div>
<div class="hd" style="left:497.6px;top:329.6px;width:51.2px;height:10.2px">返回</div>
<div class="hd" style="left:548.8px;top:329.6px;width:58.2px;height:10.2px">返回系数</div>
<svg class="a" style="left:393.8px;top:342.7px" width="8" height="8" viewBox="0 0 8 8"><rect x=".5" y=".5" width="7" height="7" fill="#fff" stroke="#5a5a5a" stroke-width=".85"/></svg>
<div class="m" style="left:411px;top:342.2px;">UA</div>
<svg class="a" style="left:393.8px;top:353.7px" width="8" height="8" viewBox="0 0 8 8"><rect x=".5" y=".5" width="7" height="7" fill="#fff" stroke="#5a5a5a" stroke-width=".85"/></svg>
<div class="m" style="left:411px;top:353.2px;">UB</div>
<svg class="a" style="left:393.8px;top:364.7px" width="8" height="8" viewBox="0 0 8 8"><rect x=".5" y=".5" width="7" height="7" fill="#fff" stroke="#5a5a5a" stroke-width=".85"/></svg>
<div class="m" style="left:411px;top:364.2px;">UC</div>
<svg class="a" style="left:393.8px;top:375.7px" width="8" height="8" viewBox="0 0 8 8"><rect x=".5" y=".5" width="7" height="7" fill="#fff" stroke="#5a5a5a" stroke-width=".85"/></svg>
<div class="m" style="left:411px;top:375.2px;">IA</div>
<svg class="a" style="left:393.8px;top:386.7px" width="8" height="8" viewBox="0 0 8 8"><rect x=".5" y=".5" width="7" height="7" fill="#fff" stroke="#5a5a5a" stroke-width=".85"/></svg>
<div class="m" style="left:411px;top:386.2px;">IB</div>
<svg class="a" style="left:393.8px;top:397.7px" width="8" height="8" viewBox="0 0 8 8"><rect x=".5" y=".5" width="7" height="7" fill="#fff" stroke="#5a5a5a" stroke-width=".85"/></svg>
<div class="m" style="left:411px;top:397.2px;">IC</div>
<svg class="a" style="left:393.8px;top:408.7px" width="8" height="8" viewBox="0 0 8 8"><rect x=".5" y=".5" width="7" height="7" fill="#fff" stroke="#5a5a5a" stroke-width=".85"/></svg>
<div class="m" style="left:411px;top:408.2px;">Ux</div>
<div class="a" style="left:606.6px;top:329.4px;width:11.2px;height:89.2px;background:#f3f3f3"></div>
<div class="a" style="left:608.2px;top:341px;width:8.4px;height:13.2px;background:#c6c6c6"></div>
<svg class="a" style="left:608.6px;top:332px" width="8" height="86" viewBox="0 0 8 86"><path d="M1.200 4.600l2.600-2.600 2.600 2.600M1.200 80.400l2.600 2.600 2.600-2.600" stroke="#444" stroke-width=".9" fill="none"/></svg>
<div class="a" style="left:120.2px;top:424.6px;width:508.4px;height:14.0px;background:#fdfdfd;border-radius:0 0 4px 4px"></div>
<div class="a" style="left:120.2px;top:426.6px;width:508.4px;height:0.7px;background:#e2e2e2"></div>
<div class="t" style="left:121.4px;top:428.3px;">就绪</div>
<div class="a" style="left:414.6px;top:427px;width:60.0px;height:11.4px;border-top:0.9px solid #bdbdbd;border-left:0.9px solid #bdbdbd;border-right:0.8px solid #ececec"></div>
<div class="a" style="left:477.2px;top:427px;width:151.4px;height:11.4px;border-top:0.9px solid #bdbdbd;border-left:0.9px solid #bdbdbd"></div>
<div class="t" style="left:416.6px;top:429.1px;font-size:7.9px">运行时间: 0.00s</div>
<div class="t" style="left:478.8px;top:429.1px;font-size:7.9px">开关量:</div>
<div class="t" style="left:505.4px;top:429.3px;font-size:7.9px">A</div>
<div class="a" style="left:510.8px;top:428.7px;width:6.2px;height:6.2px;border-radius:50%;background:#919191"></div>
<div class="t" style="left:520.9px;top:429.3px;font-size:7.9px">B</div>
<div class="a" style="left:526.2px;top:428.7px;width:6.2px;height:6.2px;border-radius:50%;background:#919191"></div>
<div class="t" style="left:536px;top:429.3px;font-size:7.9px">C</div>
<div class="a" style="left:541.4px;top:428.7px;width:6.2px;height:6.2px;border-radius:50%;background:#919191"></div>
<div class="t" style="left:551.8px;top:429.3px;font-size:7.9px">R</div>
<div class="a" style="left:556.9px;top:428.7px;width:6.2px;height:6.2px;border-radius:50%;background:#919191"></div>
<div class="t" style="left:567.3px;top:429.3px;font-size:7.9px">a</div>
<div class="a" style="left:571.6px;top:428.7px;width:6.2px;height:6.2px;border-radius:50%;background:#919191"></div>
<div class="t" style="left:582.8px;top:429.3px;font-size:7.9px">b</div>
<div class="a" style="left:587.2px;top:428.7px;width:6.2px;height:6.2px;border-radius:50%;background:#919191"></div>
<div class="t" style="left:598px;top:429.3px;font-size:7.9px">c</div>
<div class="a" style="left:602.9px;top:428.7px;width:6.2px;height:6.2px;border-radius:50%;background:#919191"></div>
<div class="a" style="left:697.2px;top:68.4px;width:102.8px;height:72.6px;border:1.1px solid #e23a3a;border-radius:9px"></div>
<div class="t" style="left:712.4px;top:101.3px;font-size:10.2px;line-height:12px;height:12px;top:99.4px;color:#222">通讯</div>
<svg class="a" style="left:737px;top:89px" width="13" height="31" viewBox="737 89 13 31"><rect x="737.700" y="90.500" width="20" height="27.700" rx="1" fill="#5a524b"/><rect x="739.800" y="92.800" width="20" height="23.200" fill="#6f675f"/><path d="M752 95.200h-7.200l-3.200 3.300v15.900h10.400" fill="#8c857e" stroke="#cfcac6" stroke-width=".9"/><rect x="745.900" y="100" width="10" height="7.700" fill="#f6f5fb"/><rect x="745.900" y="107.700" width="10" height="3.400" fill="#aaa39c"/></svg>
<div class="a" style="left:697.2px;top:211.8px;width:102.8px;height:212.4px;border:1.1px solid #e23a3a;border-radius:9px"></div>
<div class="a" style="left:711.1999999999999px;top:229.4px;width:25.2px;height:25.2px;border-radius:50%;background:radial-gradient(circle 12.6px at 50% 48%,#fa2a1e 0,#f41212 60%,#ea0a0a 86%,#b00808 100%);box-shadow:0 1px 1.5px rgba(60,50,70,.5)"></div>
<div class="a" style="left:711.1999999999999px;top:235px;width:25.2px;height:14px;line-height:14px;text-align:center;font-weight:bold;font-size:8.6px;color:#fff">停止</div>
<div class="a" style="left:746.6px;top:229.4px;width:25.2px;height:25.2px;border-radius:50%;background:radial-gradient(circle 12.6px at 50% 48%,#fff23a 0,#ffe800 70%,#e8cc00 88%,#9a8600 100%);box-shadow:0 1px 1.5px rgba(60,50,70,.5)"></div>
<div class="a" style="left:711.4px;top:260.29999999999995px;width:25.2px;height:25.2px;border-radius:50%;background:radial-gradient(circle closest-side at 50% 50%,#ffffff 0,#fdfdfe 74%,#f1eef4 84%,#6a6470 90%,#463f4c 94%,#8a8490 98%,#c0bac6 100%);box-shadow:0 1px 1.5px rgba(60,50,70,.5)"></div>
<div class="a" style="left:711.4px;top:265.9px;width:25.2px;height:14px;line-height:14px;text-align:center;font-weight:bold;font-size:12.4px;color:#241a2c">1</div>
<div class="a" style="left:711.4px;top:291.09999999999997px;width:25.2px;height:25.2px;border-radius:50%;background:radial-gradient(circle closest-side at 50% 50%,#ffffff 0,#fdfdfe 74%,#f1eef4 84%,#6a6470 90%,#463f4c 94%,#8a8490 98%,#c0bac6 100%);box-shadow:0 1px 1.5px rgba(60,50,70,.5)"></div>
<div class="a" style="left:711.4px;top:296.7px;width:25.2px;height:14px;line-height:14px;text-align:center;font-weight:bold;font-size:12.4px;color:#241a2c">4</div>
<div class="a" style="left:711.4px;top:321.4px;width:25.2px;height:25.2px;border-radius:50%;background:radial-gradient(circle closest-side at 50% 50%,#ffffff 0,#fdfdfe 74%,#f1eef4 84%,#6a6470 90%,#463f4c 94%,#8a8490 98%,#c0bac6 100%);box-shadow:0 1px 1.5px rgba(60,50,70,.5)"></div>
<div class="a" style="left:711.4px;top:327px;width:25.2px;height:14px;line-height:14px;text-align:center;font-weight:bold;font-size:12.4px;color:#241a2c">7</div>
<div class="a" style="left:711.4px;top:351.7px;width:25.2px;height:25.2px;border-radius:50%;background:radial-gradient(circle closest-side at 50% 50%,#ffffff 0,#fdfdfe 74%,#f1eef4 84%,#6a6470 90%,#463f4c 94%,#8a8490 98%,#c0bac6 100%);box-shadow:0 1px 1.5px rgba(60,50,70,.5)"></div>
<div class="a" style="left:711.4px;top:357.3px;width:25.2px;height:14px;line-height:14px;text-align:center;font-weight:bold;font-size:12.4px;color:#241a2c">0</div>
<div class="a" style="left:746.6px;top:260.29999999999995px;width:25.2px;height:25.2px;border-radius:50%;background:radial-gradient(circle closest-side at 50% 50%,#ffffff 0,#fdfdfe 74%,#f1eef4 84%,#6a6470 90%,#463f4c 94%,#8a8490 98%,#c0bac6 100%);box-shadow:0 1px 1.5px rgba(60,50,70,.5)"></div>
<div class="a" style="left:746.6px;top:291.09999999999997px;width:25.2px;height:25.2px;border-radius:50%;background:radial-gradient(circle closest-side at 50% 50%,#ffffff 0,#fdfdfe 74%,#f1eef4 84%,#6a6470 90%,#463f4c 94%,#8a8490 98%,#c0bac6 100%);box-shadow:0 1px 1.5px rgba(60,50,70,.5)"></div>
<div class="a" style="left:746.6px;top:321.4px;width:25.2px;height:25.2px;border-radius:50%;background:radial-gradient(circle closest-side at 50% 50%,#ffffff 0,#fdfdfe 74%,#f1eef4 84%,#6a6470 90%,#463f4c 94%,#8a8490 98%,#c0bac6 100%);box-shadow:0 1px 1.5px rgba(60,50,70,.5)"></div>
<div class="a" style="left:746.6px;top:351.7px;width:25.2px;height:25.2px;border-radius:50%;background:radial-gradient(circle 12.6px at 50% 49%,#1f76f8 0,#1568f2 78%,#0f52d8 88%,#0a2f98 95%,#2a3a80 100%);box-shadow:0 1px 1.5px rgba(60,50,70,.5)"></div>
<div class="a" style="left:711.4px;top:382.4px;width:25.2px;height:25.2px;border-radius:50%;background:radial-gradient(circle 12.6px at 50% 49%,#1f76f8 0,#1568f2 78%,#0f52d8 88%,#0a2f98 95%,#2a3a80 100%);box-shadow:0 1px 1.5px rgba(60,50,70,.5)"></div>
<div class="a" style="left:746.6px;top:382.4px;width:25.2px;height:25.2px;border-radius:50%;background:radial-gradient(circle 12.6px at 50% 49%,#1f76f8 0,#1568f2 78%,#0f52d8 88%,#0a2f98 95%,#2a3a80 100%);box-shadow:0 1px 1.5px rgba(60,50,70,.5)"></div>
<svg class="a" style="left:716px;top:390px" width="16" height="10" viewBox="0 0 16 10"><path d="M3 5h10.500" stroke="#fff" stroke-width="1.700"/><path d="M1.400 5l4.400-3v6z" fill="#fff"/></svg>
<div class="a" style="left:72.4px;top:471.3px;width:20px;height:20px;border-radius:50%;background:radial-gradient(circle 13px at 40% 34%,#ffffff 0,#f1eff2 20%,#d2ced3 42%,#a8a4aa 64%,#817d84 84%,#bdb9bf 100%);box-shadow:0 1px 2px rgba(60,50,70,.5)"></div>
<svg class="a" style="left:76.400px;top:475.300px" width="12" height="12" viewBox="0 0 12 12"><path d="M6 2.200l1.300 2.500 2.500 1.300-2.500 1.300-1.300 2.500-1.300-2.500-2.500-1.300 2.500-1.300z" fill="#4e4a50"/><path d="M6 3.400l.7 1.900 1.900.7-1.900.7-.7 1.900-.7-1.900-1.900-.7 1.900-.7z" fill="#2c282e"/><path d="M3.200 3.400a4 4 0 0 1 5.600 0" stroke="#f4f2f4" stroke-width=".9" fill="none" opacity=".8"/></svg>
</body></html>
